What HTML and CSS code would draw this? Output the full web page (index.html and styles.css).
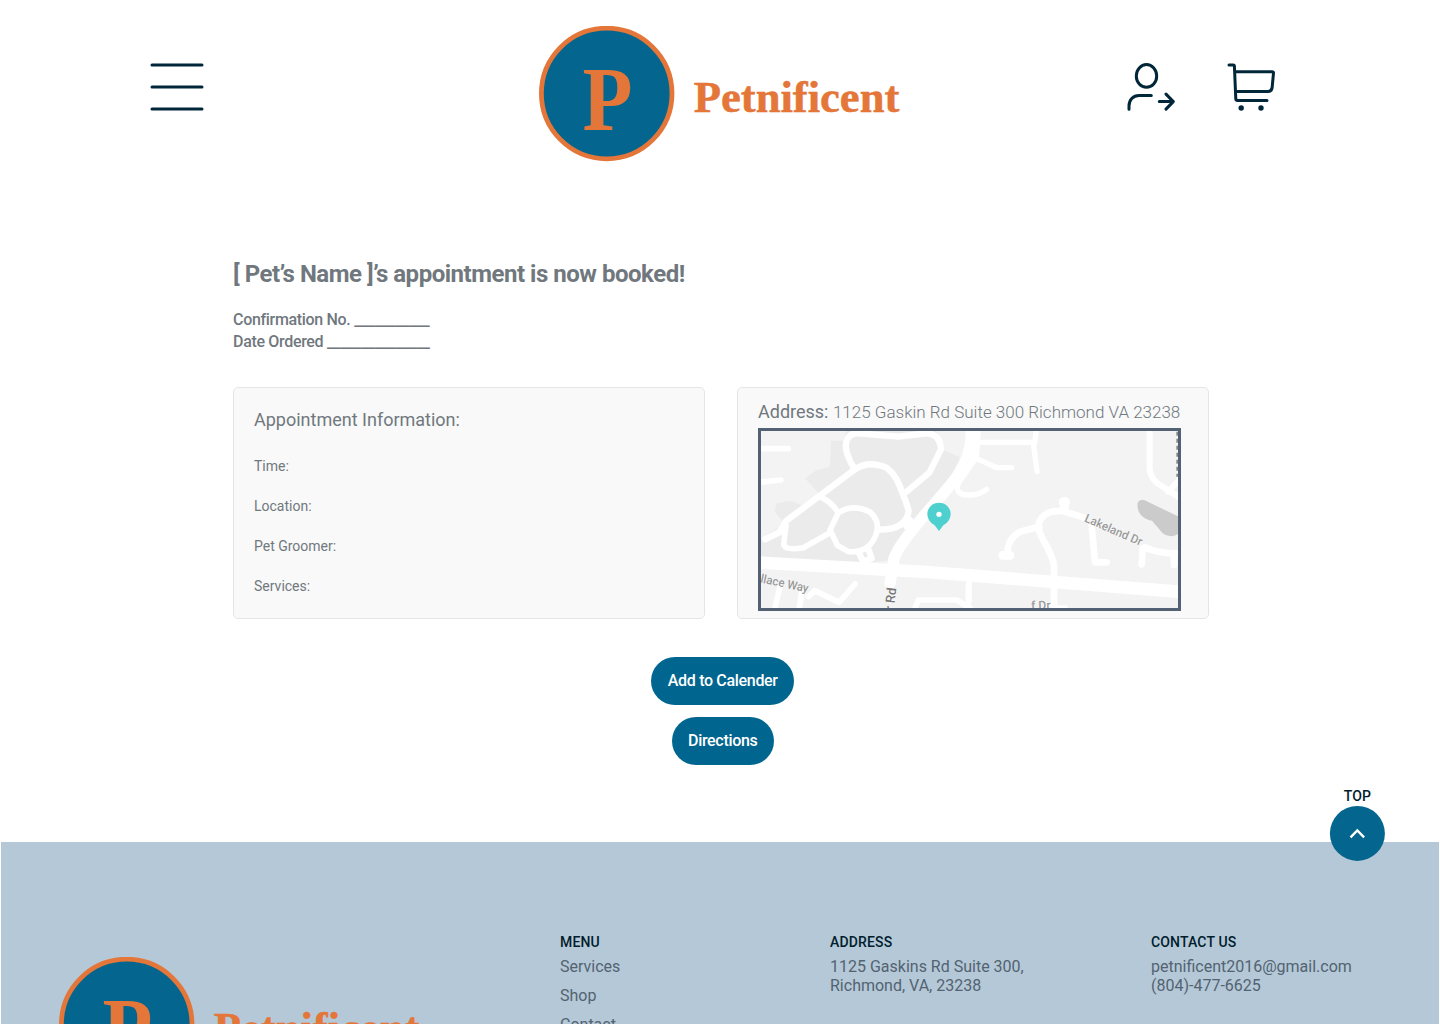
FILE: index.html
```html
<!DOCTYPE html>
<html lang="en">
<head>
<meta charset="utf-8">
<title>Petnificent – Appointment booked</title>
<link rel="stylesheet" href="styles.css">
</head>
<body>
<svg class="defs" width="0" height="0" aria-hidden="true">
  <symbol id="logo" viewBox="0 0 362 136">
    <circle cx="67.7" cy="67.5" r="65.3" fill="#04668e" stroke="#e37638" stroke-width="4.8"/>
    <text class="logo-text" x="43.5" y="103.8" font-size="91" textLength="50" lengthAdjust="spacingAndGlyphs">P</text>
    <text class="logo-text word" x="154.8" y="86" font-size="43.5" textLength="205.5" lengthAdjust="spacingAndGlyphs">Petnificent</text>
  </symbol>
</svg>
<div class="page">
  <header class="header">
    <button class="icon-button" aria-label="Menu">
      <svg width="54" height="48" viewBox="0 0 54 48"><path class="stroke" d="M2 2H52M2 24H52M2 46H52"/></svg>
    </button>
    <svg class="logo" width="362" height="136"><use href="#logo"/></svg>
    <div class="actions">
      <svg width="50" height="50" viewBox="0 0 50 50"><g class="stroke">
        <ellipse cx="21.5" cy="12.9" rx="10.2" ry="11.3"/>
        <path d="M4 46.3V43C4 37 8 32.5 14 32.5H26.3M34.3 38.6H48.3M41 31.1L48.3 38.6L41 46.1"/></g></svg>
      <svg width="50" height="50" viewBox="0 0 50 50"><g class="stroke">
        <path d="M3 2H7.3Q8.3 2 8.4 3L9.8 36Q10 37.4 11.3 37.4H41M8.9 8.8H46.2Q47.6 8.8 47.5 10L46.2 24Q45.8 28.5 41.8 28.5H9.6"/></g>
        <circle cx="15.2" cy="45" r="2.7" fill="#00263a"/><circle cx="35" cy="45" r="2.7" fill="#00263a"/></svg>
    </div>
  </header>

  <main class="main">
    <h1 class="title">[ Pet’s Name ]’s appointment is now booked!</h1>
    <p class="order">Confirmation No. ___________<br>Date Ordered _______________</p>
    <div class="cards">
      <section class="card info">
        <h2 class="card-title">Appointment Information:</h2>
        <ul class="details"><li>Time:</li><li>Location:</li><li>Pet Groomer:</li><li>Services:</li></ul>
      </section>
      <section class="card place">
        <p class="address"><span class="label">Address: </span>1125 Gaskin Rd Suite 300 Richmond VA 23238</p>
        <svg class="map" viewBox="63 153 1251 531" preserveAspectRatio="none">
          <rect x="63" y="153" width="1251" height="531" fill="#f3f3f3"/>
          <path fill="#ebebeb" d="M273 182H310L320 153H590L610 210L660 232L640 275L605 330L500 450L450 540L375 550L63 535V475L135 430L103 395L110 370L150 362L185 375L240 345L195 295L230 270L270 260Z"/>
          <path fill="#cbcbcb" d="M1193 368Q1200 356 1214 361L1314 409V463Q1288 476 1268 460L1236 422Q1215 419 1203 405Q1190 391 1193 368Z"/>
          <g class="road">
            <path d="M63 206H145M63 306L123 300"/>
            <path stroke-width="19" d="M345 268C325 240 313 205 319 185Q328 158 355 160L475 170L560 160Q600 162 603 208L568 278L500 335"/>
            <path stroke-width="19" d="M75 478L118 457L138 423L345 268Q385 240 440 263C475 290 480 326 496 360L506 392Q500 450 415 449"/>
            <path stroke-width="17" d="M138 435L131 495Q140 512 190 503L270 458M245 353Q275 367 295 398"/>
            <path stroke-width="17" d="M295 398Q340 370 390 396Q422 424 408 464Q388 520 325 515L292 496L270 450Z"/>
            <path stroke-width="19" d="M355 515L370 546L395 535L386 510M500 440L510 420"/>
            <path stroke-width="34" d="M694 153C694 235 660 285 610 340C555 405 480 485 462 535L450 610"/>
            <path stroke-width="38" d="M63 548L560 576L1314 635"/>
            <path stroke-width="16" d="M714 153L710 225L675 245M708 235L770 263H815M705 238L655 310Q642 346 690 345Q720 345 740 328M722 187H885L888 153M880 187L891 275"/>
            <path stroke-width="18" d="M1229 153V265Q1230 290 1250 308L1314 350M1285 335L1314 303"/>
            <path stroke-width="20" d="M803 520Q800 480 840 455L898 440M942 684V560C940 510 890 470 896 433Q907 390 968 393L1030 412M1055 435L1065 547H1100M1208 505L1205 553M1214 502Q1250 520 1314 521M1302 530V555"/>
            <path stroke-width="26" d="M788 526H810M973 368V385"/>
            <circle cx="973" cy="367" r="17" fill="#fff" stroke="none"/>
            <path d="M120 620L105 684M187 625L178 684M205 650L225 632L297 667L345 612M525 684L535 660H650L690 684M687 610V662M685 620V684M915 684L925 675M945 684H975"/>
          </g>
          <g class="map-label">
            <text transform="translate(60 607) rotate(12)" font-size="36" textLength="146" lengthAdjust="spacingAndGlyphs">llace Way</text>
            <text transform="translate(1031 424) rotate(23.5)" font-size="36" textLength="185" lengthAdjust="spacingAndGlyphs">Lakeland Dr</text>
            <text transform="translate(461 694) rotate(-83)" font-size="39" class="dark">r Rd</text>
            <text transform="translate(874 689) rotate(-2)" font-size="36">f Dr</text>
          </g>
          <path stroke="#888" stroke-width="6" stroke-dasharray="12 9" d="M1312 155V290"/>
          <path fill="#4ed0cf" d="M597 453L584 436Q562 424 562 402A35 34 0 0 1 632 402Q632 424 610 436Z"/>
          <circle cx="597" cy="403" r="8" fill="#fff"/>
        </svg>
      </section>
    </div>
    <div class="buttons">
      <button class="button">Add to Calender</button>
      <button class="button">Directions</button>
    </div>
  </main>

  <footer class="footer">
    <svg class="logo footer-logo" width="362" height="136"><use href="#logo"/></svg>
    <section class="column"><h3>MENU</h3><ul class="links"><li>Services</li><li>Shop</li><li>Contact</li></ul></section>
    <section class="column"><h3>ADDRESS</h3><p>1125 Gaskins Rd Suite 300,<br>Richmond, VA, 23238</p></section>
    <section class="column"><h3>CONTACT US</h3><p>petnificent2016@gmail.com<br>(804)-477-6625</p></section>
    <a class="top" href="#"><span>TOP</span>
      <svg width="56" height="56" viewBox="0 0 56 56"><circle cx="28.4" cy="28.4" r="27.5" fill="#04668e"/><path d="M21.5 32.3L28.3 25.5L35.1 32.3" fill="none" stroke="#fff" stroke-width="2.4"/></svg>
    </a>
  </footer>
</div>
</body>
</html>
```
FILE: styles.css
```css
* { box-sizing: border-box; }
body { margin: 0; background: #fff; font-family: Roboto, sans-serif; color: #70787e; }
h1, h2, h3, p, ul { margin: 0; padding: 0; }
ul { list-style: none; }
svg { display: block; }
button { border: 0; padding: 0; background: none; font: inherit; }
.defs { position: absolute; }
.page { height: 1024px; overflow: hidden; }
.header {
  height: 187px;
  padding: 26px 164px 0 150px;
  display: grid;
  grid-template-columns: 389px 362px 1fr;
  align-items: start;
}
.icon-button { width: 54px; margin-top: 37px; }
.stroke { fill: none; stroke: #00263a; stroke-width: 3; stroke-linecap: round; stroke-linejoin: round; }
.logo-text { font-family: "Liberation Serif", serif; font-weight: 700; fill: #e37638; }
.word { stroke: #e37638; stroke-width: .5px; }
.actions { display: flex; justify-content: flex-end; gap: 51px; margin-top: 37px; }
.main { width: 976px; margin-left: 233px; padding-top: 72px; height: 655px; }
.title { font-size: 24px; line-height: 30px; font-weight: 700; letter-spacing: -.48px; white-space: nowrap; }
.order { margin-top: 20px; font-size: 16px; line-height: 22px; font-weight: 500; letter-spacing: -.32px; }
.cards { display: grid; grid-template-columns: 472px 472px; gap: 32px; margin-top: 34px; }
.card { height: 232px; background: #f9f9f9; border: 1px solid #e3e5e6; border-radius: 5px; padding: 0 20px; }
.info { padding-top: 21px; }
.card-title { font-size: 18px; line-height: 22px; font-weight: 400; }
.details { margin-top: 25px; font-size: 14px; line-height: 20px; display: grid; gap: 20px; }
.place { padding-top: 13px; }
.address { height: 22px; font-size: 17px; line-height: 22px; font-weight: 300; white-space: nowrap; }
.label { font-size: 18px; font-weight: 400; }
.map { width: 423px; height: 183px; margin-top: 5px; border: 3px solid #526173; }
.road { fill: none; stroke: #fff; stroke-width: 17; stroke-linecap: round; stroke-linejoin: round; }
.map-label { fill: #999; stroke: #fff; stroke-width: 2px; paint-order: stroke; font-weight: 500; }
.dark { fill: #777; }
.buttons { display: flex; flex-direction: column; align-items: center; gap: 12px; padding: 38px 0 0 3.5px; }
.button { height: 48px; padding: 0 16.5px 2px; border-radius: 24px; background: #00658f; color: #fff; font-size: 16px; font-weight: 500; letter-spacing: -.32px; }
.footer {
  position: relative;
  height: 330px;
  margin: 0 1px;
  padding: 92px 58px 0;
  background: #b5c8d7;
  display: grid;
  grid-template-columns: 501px 270px 321px 1fr;
  align-items: start;
}
.footer-logo { margin-top: 23px; }
.column { font-size: 16px; line-height: 19px; color: #526371; }
.column h3 { font-size: 14px; line-height: 16px; font-weight: 500; letter-spacing: .15px; color: #001d2d; margin-bottom: 7px; }
.links { display: grid; gap: 10px; }
.top { position: absolute; left: 1328px; top: -55px; display: grid; justify-items: center; color: #001d2d; font-size: 14px; line-height: 18px; font-weight: 500; letter-spacing: .2px; text-decoration: none; }
.top span { padding-left: 1px; }
```
